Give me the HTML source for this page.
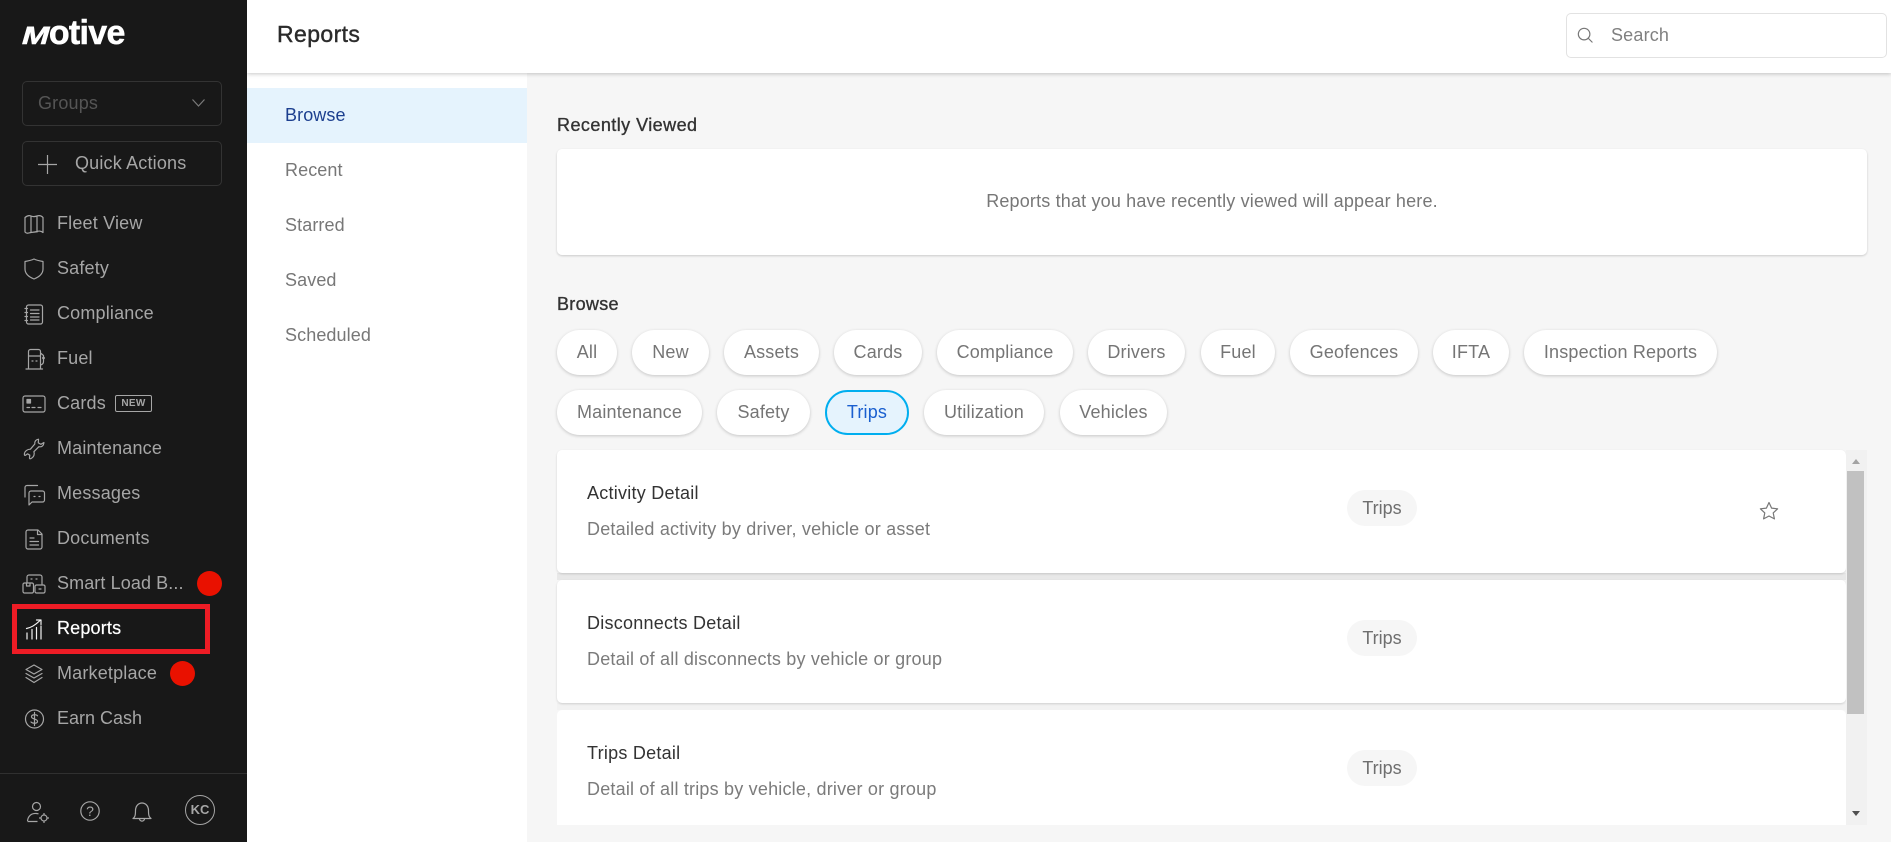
<!DOCTYPE html>
<html lang="en"><head><meta charset="utf-8"><title>Reports</title>
<style>
*{box-sizing:border-box}
html,body{margin:0;padding:0;width:1891px;height:842px;overflow:hidden;background:#f6f6f6;font-family:"Liberation Sans",sans-serif;font-size:18px;letter-spacing:.18px}
.a{position:absolute;white-space:nowrap}
#side{position:absolute;left:0;top:0;width:247px;height:842px;background:#181818}
.ni{position:absolute;left:57px;height:30px;line-height:30px;color:#a6a6a6;font-size:18px;white-space:nowrap;margin-top:1px}
.ic{position:absolute;left:22px;width:24px;height:24px;fill:none;stroke:#a6a6a6;stroke-width:1.2;stroke-linecap:round;stroke-linejoin:round}
.box{position:absolute;left:22px;width:200px;border:1px solid #333;border-radius:5px;height:45px}
.dot{position:absolute;width:25px;height:25px;border-radius:50%;background:#e91100}
.n2{position:absolute;left:285px;height:30px;line-height:30px;color:#777;font-size:18px;letter-spacing:.1px}
.chip{position:absolute;height:45px;line-height:45px;border-radius:23px;background:#fff;color:#757575;text-align:center;font-size:18px;box-shadow:0 1px 3px rgba(0,0,0,.2)}
.row{position:absolute;left:557px;width:1289px;height:123px;background:#fff;border-radius:5px;box-shadow:0 1px 2px rgba(0,0,0,.15)}
.t{position:absolute;left:587px;height:30px;line-height:30px;color:#333;font-size:18px;white-space:nowrap;letter-spacing:.25px}
.d{position:absolute;left:587px;height:30px;line-height:30px;color:#7b7b7b;font-size:18px;white-space:nowrap;letter-spacing:.2px}
.tag{position:absolute;left:1347px;width:70px;height:36px;line-height:36px;border-radius:18px;background:#f6f6f6;color:#6f6f6f;text-align:center;font-size:18px;letter-spacing:0}
</style></head><body>

<div class="a" style="left:0;top:0;width:1891px;height:842px;background:#f6f6f6"></div>
<div class="a" style="left:247px;top:73px;width:280px;height:769px;background:#fff"></div>
<div class="a" style="left:247px;top:88px;width:280px;height:55px;background:#e5f3fd"></div>
<div class="n2" style="top:100px;color:#1c3f8f">Browse</div>
<div class="n2" style="top:155px">Recent</div>
<div class="n2" style="top:210px">Starred</div>
<div class="n2" style="top:265px">Saved</div>
<div class="n2" style="top:320px">Scheduled</div>

<div class="a" style="left:247px;top:0;width:1644px;height:73px;background:#fff;box-shadow:0 1px 4px rgba(0,0,0,.22)"></div>
<div class="a" style="left:277px;top:19px;line-height:30px;font-size:23px;color:#2b2b2b;-webkit-text-stroke:.4px #2b2b2b;letter-spacing:.4px">Reports</div>
<div class="a" style="left:1566px;top:13px;width:321px;height:45px;border:1px solid #e2e2e2;border-radius:5px;background:#fff"></div>
<svg class="a" style="left:1577px;top:27px" width="16" height="16" viewBox="0 0 18 18" fill="none" stroke="#777" stroke-width="1.3" stroke-linecap="round"><circle cx="8" cy="8" r="6.500"/><path d="M12.500 12.500L17 17"/></svg>
<div class="a" style="left:1611px;top:20px;line-height:30px;color:#808080">Search</div>

<div class="a" style="left:557px;top:110px;line-height:30px;color:#333;-webkit-text-stroke:.35px #333;letter-spacing:.45px">Recently Viewed</div>
<div class="a" style="left:557px;top:149px;width:1310px;height:106px;background:#fff;border-radius:5px;box-shadow:0 1px 2px rgba(0,0,0,.18);line-height:105px;text-align:center;color:#777;letter-spacing:.17px">Reports that you have recently viewed will appear here.</div>
<div class="a" style="left:557px;top:289px;line-height:30px;color:#333;-webkit-text-stroke:.35px #333;letter-spacing:.3px">Browse</div>

<div class="chip" style="left:557px;top:330px;width:60px">All</div>
<div class="chip" style="left:632px;top:330px;width:77px">New</div>
<div class="chip" style="left:724px;top:330px;width:95px">Assets</div>
<div class="chip" style="left:834px;top:330px;width:88px">Cards</div>
<div class="chip" style="left:937px;top:330px;width:136px">Compliance</div>
<div class="chip" style="left:1088px;top:330px;width:97px">Drivers</div>
<div class="chip" style="left:1201px;top:330px;width:74px">Fuel</div>
<div class="chip" style="left:1290px;top:330px;width:128px">Geofences</div>
<div class="chip" style="left:1433px;top:330px;width:76px">IFTA</div>
<div class="chip" style="left:1524px;top:330px;width:193px">Inspection Reports</div>
<div class="chip" style="left:557px;top:390px;width:145px">Maintenance</div>
<div class="chip" style="left:717px;top:390px;width:93px">Safety</div>
<div class="chip" style="left:825px;top:390px;width:84px;background:#e5f3fd;border:2px solid #00aeef;line-height:41px;color:#1a5fcf;box-shadow:none">Trips</div>
<div class="chip" style="left:924px;top:390px;width:120px">Utilization</div>
<div class="chip" style="left:1060px;top:390px;width:107px">Vehicles</div>

<div class="a" style="left:557px;top:573px;width:1289px;height:7px;background:#e8e8e8"></div>
<div class="a" style="left:557px;top:703px;width:1289px;height:7px;background:#f2f2f2"></div>
<div class="row" style="top:450px"></div>
<div class="row" style="top:580px"></div>
<div class="a" style="left:557px;top:710px;width:1289px;height:115px;background:#fff;border-radius:5px 5px 0 0"></div>
<div class="t" style="top:478px">Activity Detail</div><div class="d" style="top:514px">Detailed activity by driver, vehicle or asset</div>
<div class="t" style="top:608px">Disconnects Detail</div><div class="d" style="top:644px">Detail of all disconnects by vehicle or group</div>
<div class="t" style="top:738px">Trips Detail</div><div class="d" style="top:774px">Detail of all trips by vehicle, driver or group</div>
<div class="tag" style="top:490px">Trips</div><div class="tag" style="top:620px">Trips</div><div class="tag" style="top:750px">Trips</div>
<svg class="a" style="left:1759px;top:501px" width="20" height="20" viewBox="0 0 20 20" fill="none" stroke="#777" stroke-width="1.2" stroke-linejoin="round"><path d="M10 1.500l2.600 5.600 6 .7-4.400 4.100 1.200 6L10 15l-5.400 2.900 1.200-6L1.400 7.800l6-.7z"/></svg>

<div class="a" style="left:1846px;top:450px;width:21px;height:375px;background:#f1f1f1"></div>
<div class="a" style="left:1847px;top:471px;width:17px;height:243px;background:#c1c1c1"></div>
<svg class="a" style="left:1851px;top:458px" width="10" height="8"><path d="M5 1L9 6H1z" fill="#a3a3a3"/></svg>
<svg class="a" style="left:1851px;top:809px" width="10" height="8"><path d="M5 7L9 2H1z" fill="#505050"/></svg>

<div id="side"></div>
<div class="a" style="left:22px;top:10px;height:46px;line-height:46px;font-weight:700;color:#fff;letter-spacing:-.7px;-webkit-text-stroke:.5px #fff"><span style="display:inline-block;font-size:25px;transform-origin:0 100%;transform:skewX(-16deg) scaleX(1.3);margin-left:-6.500px;margin-right:12.500px;letter-spacing:0">M</span><span style="font-size:34px">otive</span></div>
<div class="box" style="top:81px"></div>
<div class="a" style="left:38px;top:88px;line-height:30px;color:#555">Groups</div>
<svg class="a" style="left:191px;top:98px" width="15" height="10" fill="none" stroke="#7a7a7a" stroke-width="1.2"><path d="M1.500 1.500L7.500 8L13.500 1.500"/></svg>
<div class="box" style="top:141px"></div>
<svg class="a" style="left:38px;top:155px" width="19" height="19" stroke="#a6a6a6" stroke-width="1.2"><path d="M9.500 0V19M0 9.500H19"/></svg>
<div class="a" style="left:75px;top:148px;line-height:30px;color:#a6a6a6">Quick Actions</div>

<div class="ni" style="top:207px">Fleet View</div>
<svg class="ic" style="top:212px" viewBox="0 0 24 24"><path d="M3 5.500c2.500-2.200 4.500-2.200 6-1.500s4 .7 6 0 4-.7 6 1.500v15c-2-1.700-4-1.700-6-1s-4 .7-6 1-4 1.700-6-.5zM9 4.500V20M15 4.500V20"/></svg>
<div class="ni" style="top:252px">Safety</div>
<svg class="ic" style="top:257px" viewBox="0 0 24 24"><path d="M12 2c3 1.500 6 2 9 2.500V12c0 5-4 8-9 10C7 20 3 17 3 12V4.500C6 4 9 3.500 12 2z"/></svg>
<div class="ni" style="top:297px">Compliance</div>
<svg class="ic" style="top:302px" viewBox="0 0 24 24"><rect x="4.500" y="3" width="16" height="19" rx="2"/><path d="M8.500 8h8.500M8.500 11.500h8.500M8.500 15h8.500M8.500 18h8.500M3 6.500h2.500M3 10.500h2.500M3 14.500h2.500M3 18.500h2.500"/></svg>
<div class="ni" style="top:342px">Fuel</div>
<svg class="ic" style="top:347px" viewBox="0 0 24 24"><path d="M6.500 21.500V4.500a2 2 0 012-2h8a2 2 0 012 2v17M4 22h16.500M6.500 9h12M18.500 6l3 2.500v6c0 2-1 3-3 3.500M10 14h1M14 14h1"/><circle cx="21.500" cy="11" r=".8"/></svg>
<div class="ni" style="top:387px">Cards</div>
<svg class="ic" style="top:392px" viewBox="0 0 24 24"><rect x="1" y="4" width="22" height="16" rx="2"/><rect x="5" y="7.500" width="3.500" height="3.500" fill="#a6a6a6"/><path d="M5 15.500h2.500M10 15.500h3M16 15.500h3"/></svg>
<div class="a" style="left:115px;top:395px;width:37px;height:17px;line-height:15px;border:1px solid #a6a6a6;border-radius:2px;text-align:center;font-size:10px;font-weight:700;color:#a6a6a6;letter-spacing:.3px">NEW</div>
<div class="ni" style="top:432px">Maintenance</div>
<svg class="ic" style="top:437px" viewBox="0 0 24 24"><path d="M16.500 2.200c-2.600.3-4.100 2.200-3.700 4.800L8.400 12.200c-2.800 0-5.700 1.700-6 4.800-.1 1.400.5 1.800 1.500 1l1.600-1.200 2.300 1.400-.3 2.300c-.2 1.300.5 1.600 1.600 1 2.900-1.500 3.700-4.300 2.800-6.800l5-5c2.800.6 4.800-1 5-4.200l-3 1.800-2.600-1.400z"/></svg>
<div class="ni" style="top:477px">Messages</div>
<svg class="ic" style="top:482px" viewBox="0 0 24 24"><path d="M15.500 3.500H5a2 2 0 00-2 2V15M9 9h11.500a2 2 0 012 2v7a2 2 0 01-2 2H10l-3 3V11a2 2 0 012-2zM12 14.500h1M17 14.500h1"/></svg>
<div class="ni" style="top:522px">Documents</div>
<svg class="ic" style="top:527px" viewBox="0 0 24 24"><path d="M4 5a2 2 0 012-2h10l4 4v13a2 2 0 01-2 2H6a2 2 0 01-2-2zM15.500 3v4.500H20M8 11h4M8 14.500h8.500M8 18h8.500"/></svg>
<div class="ni" style="top:567px;letter-spacing:.1px">Smart Load B...</div>
<svg class="ic" style="top:572px" viewBox="0 0 24 24"><path d="M5 11V5a2 2 0 012-2h11a2 2 0 012 2v7M9 7h1M14 7h1"/><rect x="1" y="11" width="10.500" height="10" rx="1.500"/><rect x="13" y="13" width="10" height="8" rx="1.500"/><path d="M4.500 11v3h3.500v-3M17 17h2"/></svg>
<div class="dot" style="left:197px;top:571px"></div>
<div class="a" style="left:12px;top:604px;width:198px;height:50px;border:5px solid #ee1c25"></div>
<div class="ni" style="top:612px;color:#fff;-webkit-text-stroke:.2px #fff">Reports</div>
<svg class="ic" style="top:617px;stroke:#f2f2f2" viewBox="0 0 24 24"><path d="M4.500 11.500c4-.8 9-3.500 13.500-8M14.500 3h4.500v4.500M5 16v6M10 12.500V22M14.500 10.500V22M19 9v13"/></svg>
<div class="ni" style="top:657px">Marketplace</div>
<svg class="ic" style="top:662px" viewBox="0 0 24 24"><path d="M12 3l8 4.500-8 4.500-8-4.500zM4 11.500l8 4.500 8-4.500M4 15.500l8 5 8-5"/></svg>
<div class="dot" style="left:170px;top:661px"></div>
<div class="ni" style="top:702px;letter-spacing:0">Earn Cash</div>
<svg class="ic" style="top:707px" viewBox="0 0 24 24"><circle cx="12.500" cy="12" r="9"/><path d="M15.500 8.800c-1-1.500-6-1.700-6 1s6 1.800 6 4.500-5 2.300-6.500 .7M12.500 5.500v13"/></svg>
<div class="a" style="left:0;top:773px;width:247px;height:1px;background:#303030"></div>
<svg class="a" style="left:26px;top:800px;fill:none;stroke:#a6a6a6;stroke-width:1.200" width="24" height="24" viewBox="0 0 24 24"><circle cx="10.500" cy="6.500" r="4"/><path d="M1.500 21c.5-5 4-8 9-7.500 1 .1 1.500.2 2 .5M1.500 21.500h10"/><circle cx="18" cy="18" r="3"/><path d="M18 13v2M18 21v2M13 18h2M21 18h2"/></svg>
<svg class="a" style="left:80px;top:801px;fill:none;stroke:#a6a6a6;stroke-width:1.200" width="20" height="20" viewBox="0 0 20 20"><circle cx="10" cy="10" r="9.200"/></svg>
<div class="a" style="left:80px;top:801px;width:20px;line-height:20px;text-align:center;font-size:14px;color:#a6a6a6;letter-spacing:0">?</div>
<svg class="a" style="left:131px;top:801px;fill:none;stroke:#a6a6a6;stroke-width:1.200;stroke-linejoin:round" width="22" height="22" viewBox="0 0 22 22"><path d="M2 17.500c2-1.500 2.500-3 2.500-8 0-4.500 3-7.500 6.500-7.500s6.500 3 6.500 7.500c0 5 .5 6.500 2.500 8zM8.500 17.500c0 3.500 5 3.500 5 0"/></svg>
<div class="a" style="left:185px;top:795px;width:30px;height:30px;border:1.200px solid #a6a6a6;border-radius:50%;text-align:center;line-height:28px;font-size:13px;font-weight:700;color:#a6a6a6;letter-spacing:0">KC</div>
</body></html>
